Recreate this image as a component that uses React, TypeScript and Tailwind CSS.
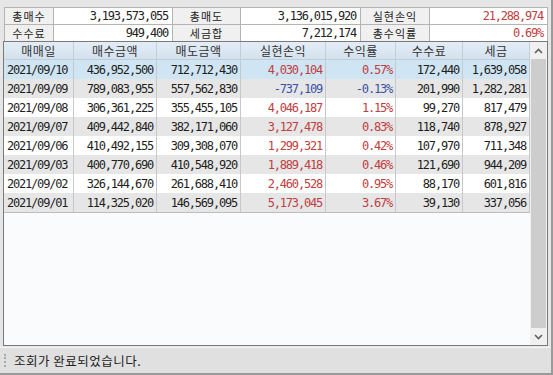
import React from 'react'

const kr = { fontFamily: '"Noto Sans CJK KR", "Noto Sans", sans-serif' }

type Row = [string, string, string, string, string, string, string]

const rows: Row[] = [
  ['2021/09/10', '436,952,500', '712,712,430', '4,030,104', '0.57%', '172,440', '1,639,058'],
  ['2021/09/09', '789,083,955', '557,562,830', '-737,109', '-0.13%', '201,990', '1,282,281'],
  ['2021/09/08', '306,361,225', '355,455,105', '4,046,187', '1.15%', '99,270', '817,479'],
  ['2021/09/07', '409,442,840', '382,171,060', '3,127,478', '0.83%', '118,740', '878,927'],
  ['2021/09/06', '410,492,155', '309,308,070', '1,299,321', '0.42%', '107,970', '711,348'],
  ['2021/09/03', '400,770,690', '410,548,920', '1,889,418', '0.46%', '121,690', '944,209'],
  ['2021/09/02', '326,144,670', '261,688,410', '2,460,528', '0.95%', '88,170', '601,816'],
  ['2021/09/01', '114,325,020', '146,569,095', '5,173,045', '3.67%', '39,130', '337,056'],
]

const headers = ['매매일', '매수금액', '매도금액', '실현손익', '수익률', '수수료', '세금']
const cols = 'grid grid-cols-[70px_83px_84px_85px_70px_67px_67px]'
const num = "font-['DejaVu_Sans_Mono',monospace] text-[12px] leading-[14px] tracking-[-1.2px]"

function Label({ children }: { children: React.ReactNode }) {
  return (
    <div className="flex items-center justify-center bg-[#f0f0f0] border-r border-b border-[#b4b4b4] text-[11px] leading-[13px] tracking-[1px] text-[#222]" style={kr}>
      {children}
    </div>
  )
}

function Value({ children, red }: { children: React.ReactNode; red?: boolean }) {
  return (
    <div className={`flex items-center justify-end pr-[4px] bg-white border-r border-b border-[#b4b4b4] ${num} ${red ? 'text-[#c0403f]' : 'text-[#222]'}`}>
      {children}
    </div>
  )
}

function Chevron({ up }: { up?: boolean }) {
  return (
    <svg width="9" height="6" viewBox="0 0 9 6">
      <path d={up ? 'M1 5 L4.5 1.5 L8 5' : 'M1 1 L4.5 4.5 L8 1'} fill="none" stroke="#606060" strokeWidth="1.6" />
    </svg>
  )
}

export default function App() {
  return (
    <div className="w-[553px] h-[375px] bg-[#e6e6e6] flex flex-col border-r-2 border-b-2 border-[#9a9a9a] overflow-hidden">
      <div className="flex-1 flex flex-col pt-[7px] pl-[3px] pr-[3px]">
        {/* summary */}
        <div className="grid grid-cols-[49px_119px_68px_120px_69px_118px] grid-rows-[17px_17px] border-l border-t border-[#b4b4b4] ml-px">
          <Label>총매수</Label>
          <Value>3,193,573,055</Value>
          <Label>총매도</Label>
          <Value>3,136,015,920</Value>
          <Label>실현손익</Label>
          <Value red>21,288,974</Value>
          <Label>수수료</Label>
          <Value>949,400</Value>
          <Label>세금합</Label>
          <Value>7,212,174</Value>
          <Label>총수익률</Label>
          <Value red>0.69%</Value>
        </div>

        {/* grid */}
        <div className="flex h-[305px] -mt-px border border-[#7a7a7a] bg-[#fafbfd]">
          <div className="flex flex-col">
            <div className={`${cols} h-[18px] bg-gradient-to-b from-[#e4edf6] to-[#d3e1ee] border-b border-[#c4ccd4]`}>
              {headers.map((h) => (
                <div key={h} className="flex items-center justify-center border-r border-[#c2cedb] text-[12px] leading-[14px] tracking-[0.5px] text-[#333]" style={kr}>
                  {h}
                </div>
              ))}
            </div>
            {rows.map((r, i) => {
              const neg = r[3].startsWith('-')
              const bg = i === 0 ? 'bg-[#cfe5f3]' : i % 2 === 1 ? 'bg-[#e6e6e6]' : 'bg-white'
              const pnl = neg ? 'text-[#3b52a3]' : 'text-[#c0403f]'
              return (
                <div key={r[0]} className={`${cols} h-[19px] ${bg} ${num} text-[#1e1e1e]`}>
                  <div className="flex items-center pl-[3px] border-r border-[#c8c8c8]">{r[0]}</div>
                  <div className="flex items-center justify-end pr-[3px] border-r border-[#c8c8c8]">{r[1]}</div>
                  <div className="flex items-center justify-end pr-[3px] border-r border-[#c8c8c8]">{r[2]}</div>
                  <div className={`flex items-center justify-end pr-[3px] border-r border-[#c8c8c8] ${pnl}`}>{r[3]}</div>
                  <div className={`flex items-center justify-end pr-[3px] border-r border-[#c8c8c8] ${pnl}`}>{r[4]}</div>
                  <div className="flex items-center justify-end pr-[3px] border-r border-[#c8c8c8]">{r[5]}</div>
                  <div className="flex items-center justify-end pr-[3px] border-r border-[#c8c8c8]">{r[6]}</div>
                </div>
              )
            })}
            <div className="border-t border-[#bdbdbd]" />
          </div>
          {/* scrollbar */}
          <div className="w-[17px] flex flex-col bg-[#f0f0f0]">
            <div className="h-[17px] flex items-center justify-center">
              <Chevron up />
            </div>
            <div className="flex-1 mx-px bg-[#cdcdcd]" />
            <div className="h-[17px] flex items-center justify-center">
              <Chevron />
            </div>
          </div>
        </div>
      </div>

      {/* status bar */}
      <div className="h-[26px] flex items-center bg-[#e0e0e0] border-t border-[#f4f4f4]">
        <div className="ml-[4px] h-[13px] w-[2px] border-l-2 border-dotted border-[#a8a8a8]" />
        <span className="ml-[8px] text-[12.5px] leading-[15px] tracking-[0.5px] text-[#222]" style={kr}>
          조회가 완료되었습니다.
        </span>
      </div>
    </div>
  )
}
